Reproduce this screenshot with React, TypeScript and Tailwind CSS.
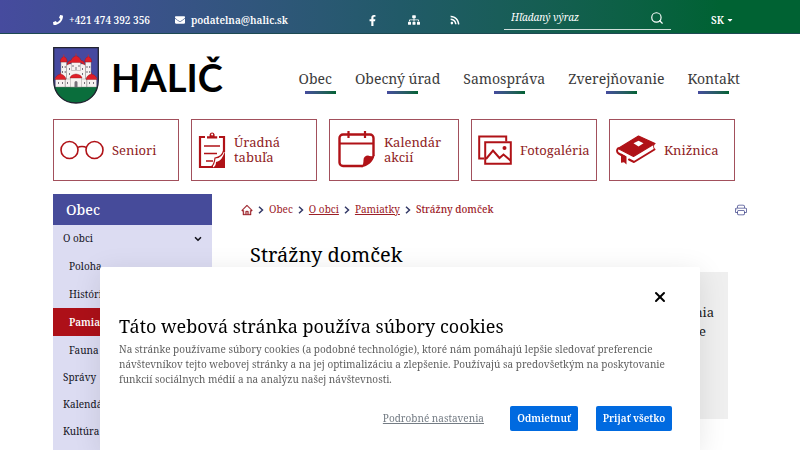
import React, { useState } from 'react';
import { FaPhone, FaEnvelope, FaFacebookF, FaSitemap, FaRss, FaCaretDown } from 'react-icons/fa';
import { BsPrinter } from 'react-icons/bs';
import { AiOutlineHome } from 'react-icons/ai';
import { ChevronDown, Search, X } from 'lucide-react';

interface QuickLink {
  label: string;
  icon: React.ReactNode;
}

interface MenuItem {
  label: string;
  sub?: boolean;
  active?: boolean;
  open?: boolean;
}

const GlassesIcon = () => (
  <svg viewBox="0 0 44 20" className="w-11 h-5 shrink-0" fill="none" stroke="#b01217" strokeWidth="1.6">
    <circle cx="9.5" cy="10" r="8.5" />
    <circle cx="34.5" cy="10" r="8.5" />
    <path d="M18 7.6c1-1.4 7-1.4 8 0" />
  </svg>
);

const ClipboardIcon = () => (
  <svg viewBox="0 0 28 38" className="w-7 h-[38px] shrink-0" fill="none" stroke="#b01217" strokeWidth="2.2">
    <path d="M7 6H2v30h13M21 6h5v15" />
    <path d="M9 7.5V5.200h2.600V3.400a2.600 2.600 0 0 1 5 0v1.800h2.600v2.300z" fill="#b01217" stroke="none" />
    <circle cx="14.100" cy="3.500" r="1" fill="#fff" stroke="none" />
    <path d="M6 15h16M6 22.500h13M8 30h7" strokeWidth="1.700" />
    <path d="M27 20v17H14c3-1 4-3 4-6 5-1 7-5 9-11z" fill="#b01217" stroke="none" />
    <path d="M25.500 20c-1 4-4 6.500-8.500 7-.5 4-1 7-3.500 8.500" strokeWidth="1.200" />
  </svg>
);

const CalendarIcon = () => (
  <svg viewBox="-2 0 40 38" className="w-10 h-[38px] shrink-0" fill="none" stroke="#b01217" strokeWidth="2.400">
    <path d="M25 35H5a3.500 3.500 0 0 1-3.500-3.500V7A3.500 3.500 0 0 1 5 3.500h27A3.500 3.500 0 0 1 35.500 7v18" />
    <path d="M2 12.500h33" strokeWidth="2.200" />
    <path d="M10.500 0v7M27 0v7" strokeWidth="2.200" />
    <path d="M36.500 24.500c-2 1-4.500 1-6.500 0-2.500 0-4.500 1.500-4.500 4.500 0 3-.5 5-2 7.200 6-.5 12-5.700 13-11.700z" fill="#b01217" stroke="none" />
  </svg>
);

const GalleryIcon = () => (
  <svg viewBox="0 0 34 30" className="w-[34px] h-[30px] shrink-0" fill="none" stroke="#b01217" strokeWidth="2">
    <path d="M6 23.500H1.200V1.500h27v5" />
    <path d="M7.200 7.200h25.600v21.600H7.200z" />
    <path d="M8 24l7-8.500 6.500 7.500 4-3.500 7 6" />
    <circle cx="26.500" cy="13" r="2" fill="#b01217" stroke="none" />
  </svg>
);

const BookIcon = () => (
  <svg viewBox="0 0 40 30" className="w-10 h-[30px] shrink-0" fill="none" stroke="#b01217">
    <path d="M22.500 1L39 8.500 17.500 21.500 2 13.500z" fill="#b01217" strokeWidth="1.200" strokeLinejoin="round" />
    <path d="M17.500 8.200l5-2.500 5 2.600-5 3.200z" fill="#fff" stroke="none" />
    <path d="M2.200 13.200c-1.700 1.500-1.500 4.300.4 5.300L9 22" strokeWidth="2" strokeLinecap="round" />
    <path d="M13 24.500l5 2.500 20.500-12.500" strokeWidth="2" strokeLinecap="round" strokeLinejoin="round" />
    <path d="M38.500 8.500c-1.300 1.800-1.300 3.600 0 5.800" strokeWidth="1" />
    <path d="M5 18.500l5.500 3v8l-2.500-2.300-3 .6z" fill="#b01217" stroke="none" />
  </svg>
);

const CrestIcon = () => (
  <svg viewBox="0 0 46 57" className="w-[46px] h-[57px] shrink-0">
    <path d="M.7.7h44.600v32.500C45.300 46.500 36 56 23 56S.7 46.500.7 33.200z" fill="#4649a0" />
    <path d="M1.200 40h43.600C42.500 49.500 34 56 23 56S3.500 49.500 1.200 40z" fill="#0a6e3c" />
    <g fill="#f6f2f1" stroke="#8a8486" strokeWidth=".4">
      <path d="M8 15h5.500v17H8zM32.500 15H38v17h-5.500zM13.500 17h19v18h-19z" />
      <path d="M18.500 13.500h9v10h-9z" />
      <path d="M2.500 31h10v9h-10zM33.500 31h10v9h-10zM12 32h22v8H12z" />
      <path d="M17.500 30.500h11v9.500h-11z" />
    </g>
    <g fill="#e01e28" stroke="#8b1a22" strokeWidth=".4">
      <path d="M7.300 15c0-3 1.200-4.500 3.500-5.500 2.300 1 3.400 2.500 3.400 5.500zM31.800 15c0-3 1.200-4.500 3.500-5.500 2.300 1 3.400 2.500 3.400 5.500z" />
      <path d="M14 18c.3-3 2-4.500 4-4.500 1-3 3-4 5-4.800 2 .8 4 1.800 5 4.800 2 0 3.700 1.500 4 4.500l-4.500-2.500h-9z" />
      <path d="M2 32.500c.5-3 2-4.500 5.500-5.500 3.500 1 5 2.500 5.500 5.500zM33 32.500c.5-3 2-4.500 5.500-5.500 3.500 1 5 2.500 5.500 5.500zM17 31c.5-2.500 2.500-3.500 6-4 3.500.5 5.500 1.500 6 4z" />
    </g>
    <path d="M10.800 10V7.500M35.300 10V7.500M23 9V6.500M7.500 27v-1.500M38.500 27v-1.500" stroke="#b8323a" strokeWidth=".9" />
    <g fill="#77707a">
      <path d="M9 19h1v2H9zM11.700 19h1v2h-1zM9 24h1v2H9zM11.700 24h1v2h-1zM33.500 19h1v2h-1zM36.200 19h1v2h-1zM33.500 24h1v2h-1zM36.200 24h1v2h-1z" />
      <path d="M16 21h1v2h-1zM19.500 18h1v2h-1zM25.500 18h1v2h-1zM29 21h1v2h-1zM22.500 20h1v3h-1zM16 26h1v2h-1zM29 26h1v2h-1z" />
      <path d="M5 35h1v2H5zM9 35h1v2H9zM14 35h1v2h-1zM31 35h1v2h-1zM36 35h1v2h-1zM40 35h1v2h-1zM21.500 40v-4.500a1.500 1.500 0 0 1 3 0V40z" />
    </g>
    <path d="M.7.7h44.600v32.500C45.300 46.500 36 56 23 56S.7 46.500.7 33.200z" fill="none" stroke="#222330" strokeWidth="1.300" />
  </svg>
);

const Separator = () => (
  <svg viewBox="0 0 8 8" className="size-2 shrink-0" fill="none" stroke="#343a68" strokeWidth="1.500">
    <path d="M2 .7L5.500 4 2 7.300" />
  </svg>
);

const navItems = ['Obec', 'Obecný úrad', 'Samospráva', 'Zverejňovanie', 'Kontakt'];

const quickLinks: QuickLink[] = [
  { label: 'Seniori', icon: <GlassesIcon /> },
  { label: 'Úradná tabuľa', icon: <ClipboardIcon /> },
  { label: 'Kalendár akcií', icon: <CalendarIcon /> },
  { label: 'Fotogaléria', icon: <GalleryIcon /> },
  { label: 'Knižnica', icon: <BookIcon /> },
];

const menuItems: MenuItem[] = [
  { label: 'O obci', open: true },
  { label: 'Poloha', sub: true },
  { label: 'História', sub: true },
  { label: 'Pamiatky', sub: true, active: true },
  { label: 'Fauna', sub: true },
  { label: 'Správy' },
  { label: 'Kalendár' },
  { label: 'Kultúra' },
];

const TopBar = () => (
  <div className="h-[34px] px-[53px] pt-[7px] flex items-center bg-linear-to-r from-[#464b9e] via-[#215a68] to-[#006233] to-90% border-b border-[#1d4a52] text-white text-[10px] font-semibold">
    <a href="tel:+421474392356" className="flex items-center gap-[6px] w-[122px]">
      <FaPhone className="size-[10px]" />
      +421 474 392 356
    </a>
    <a href="mailto:podatelna@halic.sk" className="flex items-center gap-[6px] w-[192px]">
      <FaEnvelope className="size-[10px]" />
      podatelna@halic.sk
    </a>
    <div className="flex items-center gap-[30px]">
      <a href="#facebook" aria-label="Facebook"><FaFacebookF className="size-[11px]" /></a>
      <a href="#mapa" aria-label="Mapa stránok"><FaSitemap className="size-[12px]" /></a>
      <a href="#rss" aria-label="RSS"><FaRss className="size-[10px]" /></a>
    </div>
    <form className="flex items-center self-end w-[167px] h-6 ml-11 mb-[3px] px-[7px] border-b border-white/80">
      <input
        type="text"
        aria-label="Hľadaný výraz"
        placeholder="Hľadaný výraz"
        className="min-w-0 flex-1 italic font-normal outline-none placeholder:text-white"
      />
      <button type="button" aria-label="Hľadať"><Search className="size-[14px]" strokeWidth={2} /></button>
    </form>
    <button type="button" className="flex items-center gap-[2px] ml-10">
      SK
      <FaCaretDown className="size-2" />
    </button>
  </div>
);

const Header = () => (
  <header className="flex justify-between pl-[53px] pr-[60px] pt-[13px] h-[85px]">
    <a href="#domov" className="flex items-start gap-3">
      <CrestIcon />
      <span className="font-['Lato'] font-bold text-[38px] leading-[60px] text-black">HALIČ</span>
    </a>
    <nav className="flex gap-[13px] pt-[21px] text-[14px] leading-[22px] text-[#3c3c3c]">
      {navItems.map((item) => (
        <a key={item} href="#menu" className="group flex flex-col items-start whitespace-nowrap">
          <span className="pr-[10px] group-last:pr-0">{item}</span>
          <span className="self-center w-[31px] h-[3px] mt-px bg-linear-to-r from-[#464b9e] to-[#006233]" />
        </a>
      ))}
    </nav>
  </header>
);

const Sidebar = () => (
  <aside className="w-[159px] shrink-0 bg-[#dcdcf2] pb-[6px]">
    <h2 className="h-[31px] pl-[13px] flex items-center bg-[#464b9a] text-white text-[14px] font-medium">Obec</h2>
    <ul className="text-[10px] text-[#15151f]">
      {menuItems.map((item) => (
        <li key={item.label}>
          <a
            href="#polozka"
            className={`flex items-center justify-between pr-[9px] ${item.sub ? 'h-7 pl-4' : 'h-[27px] pl-[10px]'} ${
              item.active ? 'bg-[#ad1018] text-white font-semibold' : ''
            }`}
          >
            {item.label}
            {item.open && <ChevronDown className="size-[10px]" strokeWidth={4} />}
          </a>
        </li>
      ))}
    </ul>
  </aside>
);

const Breadcrumbs = () => (
  <div className="flex items-center justify-between h-[31px]">
    <nav className="flex items-center gap-1 text-[10px] text-[#9c2027]" aria-label="Omrvinky">
      <a href="#domov" aria-label="Domov"><AiOutlineHome className="size-3" strokeWidth={30} /></a>
      <Separator />
      <span>Obec</span>
      <Separator />
      <a href="#o-obci" className="underline">O obci</a>
      <Separator />
      <a href="#pamiatky" className="underline">Pamiatky</a>
      <Separator />
      <span className="font-medium">Strážny domček</span>
    </nav>
    <button type="button" aria-label="Tlačiť"><BsPrinter className="size-3 text-[#464b8e]" /></button>
  </div>
);

const CookieBar: React.FC<{ onClose: () => void }> = ({ onClose }) => (
  <div
    role="dialog"
    aria-labelledby="cookie-title"
    className="fixed bottom-0 left-1/2 -translate-x-1/2 w-3/4 h-[183px] pl-[19px] pr-7 pt-[22px] rounded-t-xs bg-white shadow-[0_5px_28px_rgba(0,0,0,0.1)]"
  >
    <div className="flex justify-end pr-1">
      <button type="button" aria-label="Zavrieť" onClick={onClose}>
        <X className="size-4 text-black" strokeWidth={3} />
      </button>
    </div>
    <h2 id="cookie-title" className="mt-[7px] text-[18px] leading-7 text-black">
      Táto webová stránka používa súbory cookies
    </h2>
    <p className="mt-[2px] text-[10px] leading-[15px] text-[#5f5f5f]">
      Na stránke používame súbory cookies (a podobné technológie), ktoré nám pomáhajú lepšie sledovať preferencie
      návštevníkov tejto webovej stránky a na jej optimalizáciu a zlepšenie. Používajú sa predovšetkým na poskytovanie
      funkcií sociálnych médií a na analýzu našej návštevnosti.
    </p>
    <div className="flex items-center justify-end mt-[19px] text-[10px]">
      <a href="#nastavenia" className="mr-[26px] text-[#747c84] underline">Podrobné nastavenia</a>
      <button type="button" onClick={onClose} className="w-[68px] h-[25px] mr-[18px] rounded-xs bg-[#006ae0] text-white font-semibold whitespace-nowrap">
        Odmietnuť
      </button>
      <button type="button" onClick={onClose} className="w-[76px] h-[25px] rounded-xs bg-[#006ae0] text-white font-semibold whitespace-nowrap">
        Prijať všetko
      </button>
    </div>
  </div>
);

export default function App() {
  const [showCookies, setShowCookies] = useState(true);

  return (
    <div className="bg-white font-['Noto_Serif','DejaVu_Serif_Condensed','DejaVu_Serif',serif]">
      <TopBar />
      <Header />
      <div className="grid grid-cols-[1fr_1fr_130px_1fr_1fr] gap-3 pl-[53px] pr-[65px]">
        {quickLinks.map((link) => (
          <a
            key={link.label}
            href="#odkaz"
            className="flex items-center gap-2 h-[62px] pl-[6px] border border-[#a2505c] text-[13px] leading-[15px] text-[#8f1c24]"
          >
            {link.icon}
            {link.label}
          </a>
        ))}
      </div>
      <div className="flex gap-[29px] pl-[53px] pr-[53px] pt-[13px]">
        <Sidebar />
        <main className="flex-1">
          <Breadcrumbs />
          <h1 className="mt-[14px] pl-[9px] text-[20px] leading-8 text-black">Strážny domček</h1>
          <div className="mt-px ml-[9px] mr-[19px] h-[147px] pt-[31px] pr-[14px] bg-[#efefef] text-right text-[13px] leading-[19px] text-[#222]">
            <p>nia</p>
            <p className="pr-2">e</p>
          </div>
        </main>
      </div>
      {showCookies && <CookieBar onClose={() => setShowCookies(false)} />}
    </div>
  );
}
